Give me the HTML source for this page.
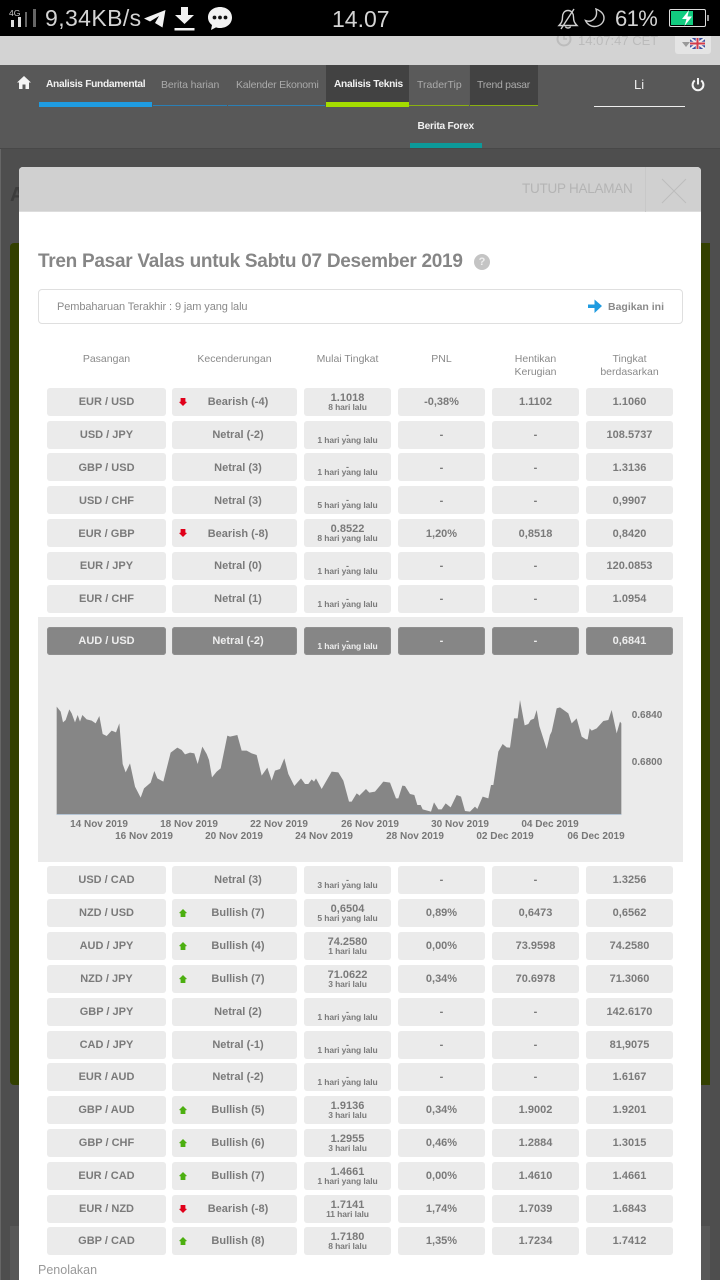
<!DOCTYPE html>
<html><head><meta charset="utf-8"><style>
*{box-sizing:border-box}
html,body{margin:0;padding:0;width:720px;height:1280px;overflow:hidden;background:#4e4e4e;font-family:"Liberation Sans",sans-serif}
.a{position:absolute;white-space:nowrap}
#st{left:0;top:0;width:720px;height:36px;background:#000;color:#d4d4d4}
#lb{left:0;top:36px;width:720px;height:29px;background:#d3d3d3;box-shadow:0 2px 5px rgba(0,0,0,.45);overflow:hidden}
#nav{left:0;top:65px;width:720px;height:83px;background:#585858}
.n{position:absolute;top:14px;font-size:10.5px;line-height:12px;color:#aaa;transform-origin:0 0}
.nb{color:#f2f2f2;font-weight:bold;font-size:10.2px}
.bar{position:absolute}
#m{left:19px;top:167px;width:682px;height:1113px;background:#fff;border-radius:4px 4px 0 0;overflow:hidden;filter:blur(.35px)}
#mh{position:absolute;left:0;top:0;width:682px;height:45px;background:#d0d0d0;border-bottom:1px solid #ddd}
#w{position:absolute;left:0;top:0;width:720px;height:1280px;filter:blur(.3px)}
.r{position:absolute;left:47px;width:627px;height:28px}
.c{position:absolute;top:0;height:28px;background:#ebebeb;border-radius:3px;text-align:center;color:#7a7a7a;font-weight:bold;font-size:11px;line-height:28px}
.t .c{line-height:30px}
.c:nth-child(1){left:0;width:119px}
.c:nth-child(2){left:125px;width:125px;padding-left:7px}
.c:nth-child(3){left:257px;width:87px}
.c:nth-child(4){left:351px;width:87px}
.c:nth-child(5){left:445px;width:87px}
.c:nth-child(6){left:539px;width:87px}
.c b{position:absolute;left:0;width:100%;top:4px;font-size:11px;line-height:12px;font-weight:bold;color:#7a7a7a}
.c i{position:absolute;left:0;width:100%;top:14px;font-style:normal;font-size:8.5px;line-height:10px;font-weight:bold;color:#7a7a7a;letter-spacing:-.1px}
.c b.d{top:8px;font-size:9px}
.up,.dn{position:absolute;left:7px;top:10px;width:8px;height:8px}
.up{background:#4caf10;clip-path:polygon(50% 0,100% 50%,80% 55%,80% 100%,20% 100%,20% 55%,0 50%)}
.dn{background:#e0001a;clip-path:polygon(20% 0,80% 0,80% 45%,100% 50%,50% 100%,0 50%,20% 45%)}
.h .c{background:#868686;color:#eee;box-shadow:inset 0 0 0 1px #8f8f8f}
.h .c b,.h .c i{color:#eee}
.th{position:absolute;text-align:center;font-size:10.5px;line-height:13px;color:#8a8a8a}
.x{position:absolute;font-size:10px;font-weight:bold;color:#777;line-height:12px;white-space:nowrap;text-align:center;width:80px}
</style></head><body>
<div id="w">
<!-- page behind -->
<div class="a" style="left:10px;top:243px;width:9px;height:842px;background:#334000;border-radius:4px 0 0 4px"></div>
<div class="a" style="left:701px;top:243px;width:9px;height:842px;background:#334000"></div>
<div class="a" style="left:0;top:148px;width:1px;height:1132px;background:#666"></div>
<div class="a" style="left:10px;top:1226px;width:9px;height:54px;background:#585858"></div>
<div class="a" style="left:701px;top:1226px;width:9px;height:54px;background:#585858"></div>
<div class="a" style="left:10px;top:184px;font-size:20px;font-weight:bold;color:#3c3c3c">A</div>

<!-- light bar -->
<div class="a" id="lb">
  <svg class="a" style="left:555px;top:-6px" width="18" height="18" viewBox="0 0 18 18"><circle cx="9" cy="9" r="6.5" fill="none" stroke="#bcbcbc" stroke-width="2"/><path d="M9 5v4h3" fill="none" stroke="#bcbcbc" stroke-width="1.5"/></svg>
  <div class="a" style="left:578px;top:-2px;font-size:13px;line-height:14px;color:#bbb">14:07:47 CET</div>
  <div class="a" style="left:675px;top:-4px;width:36px;height:22px;background:#e4e4e4;border-radius:3px"></div>
  <div class="a" style="left:682px;top:6px;border:4px solid transparent;border-top:5px solid #999"></div>
  <svg class="a" style="left:690px;top:2px" width="15" height="11" viewBox="0 0 15 11"><rect width="15" height="11" fill="#3c4fa0"/><path d="M0 0L15 11M15 0L0 11" stroke="#eee" stroke-width="2"/><path d="M7.5 0V11M0 5.5H15" stroke="#eee" stroke-width="3.5"/><path d="M7.5 0V11M0 5.5H15" stroke="#d23a4a" stroke-width="2"/></svg>
</div>

<!-- nav -->
<div class="a" id="nav">
  <svg class="a" style="left:17px;top:11px" width="14" height="13" viewBox="0 0 14 13"><path d="M7 0L14 6.5H12V13H8.5V8.5H5.5V13H2V6.5H0Z" fill="#f4f4f4"/></svg>
  <div class="bar" style="left:326px;top:0;width:83px;height:37px;background:#424242"></div>
  <div class="bar" style="left:409px;top:0;width:60px;height:40px;background:#5a5a5a"></div>
  <div class="bar" style="left:470px;top:0;width:68px;height:40px;background:#424242"></div>
  <div class="n nb" style="left:46px;letter-spacing:-.3px">Analisis Fundamental</div>
  <div class="n" style="left:161px;letter-spacing:-.1px">Berita harian</div>
  <div class="n" style="left:236px;letter-spacing:-.2px">Kalender Ekonomi</div>
  <div class="n nb" style="left:334px;letter-spacing:-.3px">Analisis Teknis</div>
  <div class="n" style="left:417px">TraderTip</div>
  <div class="n" style="left:477px;letter-spacing:-.3px">Trend pasar</div>
  <div class="bar" style="left:39px;top:37px;width:113px;height:5px;background:#1f9be0"></div>
  <div class="bar" style="left:153px;top:40px;width:74px;height:1px;background:#2a7fb5"></div>
  <div class="bar" style="left:228px;top:40px;width:97px;height:1px;background:#2a7fb5"></div>
  <div class="bar" style="left:326px;top:37px;width:83px;height:5px;background:#a4dc00"></div>
  <div class="bar" style="left:409px;top:40px;width:60px;height:1px;background:#8ab010"></div>
  <div class="bar" style="left:470px;top:40px;width:68px;height:1px;background:#8ab010"></div>
  <div class="a" style="left:634px;top:12px;font-size:13px;line-height:15px;color:#eee">Li</div>
  <div class="bar" style="left:594px;top:41px;width:91px;height:1px;background:#eee"></div>
  <svg class="a" style="left:691px;top:12px" width="14" height="15" viewBox="0 0 14 15"><path d="M3.8 3.5A5.4 5.4 0 1 0 10.2 3.5" fill="none" stroke="#f4f4f4" stroke-width="2"/><path d="M7 1V7.5" stroke="#f4f4f4" stroke-width="2"/></svg>
  <div class="n nb" style="left:417.5px;top:56px;letter-spacing:-.25px">Berita Forex</div>
  <div class="bar" style="left:410px;top:78px;width:72px;height:5px;background:#0d9a9a"></div>
</div>
<div class="a" style="left:0;top:148px;width:720px;height:1px;background:#484848"></div>

<!-- modal -->
<div class="a" id="m">
  <div id="mh"></div>
  <div class="a" style="left:503px;top:14px;font-size:13.5px;line-height:16px;color:#b4b4b4;letter-spacing:-.25px">TUTUP HALAMAN</div>
  <div class="a" style="left:626px;top:0;width:1px;height:45px;background:#c8c8c8"></div>
  <svg class="a" style="left:641px;top:10px" width="28" height="28" viewBox="0 0 28 28"><path d="M2 2L26 26M26 2L2 26" stroke="#bdbdbd" stroke-width="1"/></svg>
  <div class="a" style="left:19px;top:83px;font-size:19px;line-height:24px;font-weight:bold;color:#868686;letter-spacing:-.28px">Tren Pasar Valas untuk Sabtu 07 Desember 2019</div>
  <div class="a" style="left:455px;top:87px;width:16px;height:16px;border-radius:50%;background:#c4c4c4;color:#eee;font-size:11px;font-weight:bold;line-height:16px;text-align:center">?</div>
  <div class="a" style="left:19px;top:122px;width:645px;height:35px;border:1px solid #dfdfdf;border-radius:4px;background:#fff"></div>
  <div class="a" style="left:38px;top:133px;font-size:11px;line-height:14px;color:#8a8a8a;letter-spacing:-.1px">Pembaharuan Terakhir : 9 jam yang lalu</div>
  <svg class="a" style="left:569px;top:132px" width="14" height="14" viewBox="0 0 14 14"><path d="M0 5.5H6.5V0.5L14 7L6.5 14V9H0Z" fill="#1f9be0"/></svg>
  <div class="a" style="left:589px;top:133px;font-size:10.5px;line-height:14px;font-weight:bold;color:#8a8a8a">Bagikan ini</div>
  <div class="a" style="left:19px;top:1095px;font-size:12.5px;line-height:16px;color:#999">Penolakan</div>
</div>

<div class="th" style="left:47px;top:353px;width:119px">Pasangan</div>
<div class="th" style="left:172px;top:353px;width:125px">Kecenderungan</div>
<div class="th" style="left:304px;top:353px;width:87px">Mulai Tingkat</div>
<div class="th" style="left:398px;top:353px;width:87px">PNL</div>
<div class="th" style="left:492px;top:353px;width:87px">Hentikan<br>Kerugian</div>
<div class="th" style="left:586px;top:353px;width:87px">Tingkat<br>berdasarkan</div>

<!-- chart panel -->
<div class="a" style="left:38px;top:617px;width:645px;height:245px;background:#ebebeb"></div>
<svg class="a" style="left:0;top:0" width="720" height="1280" viewBox="0 0 720 1280">
<g transform="translate(30,620) scale(.33333)" fill="#868686">
<polygon points="80,582 80,260 92,275 99,307 107,300 118,268 125,280 135,307 143,285 150,305 157,285 170,298 185,302 197,310 208,288 218,342 230,348 245,332 258,337 268,310 278,432 287,457 300,430 315,500 332,533 342,505 362,488 373,453 382,475 400,485 422,398 442,383 455,390 465,403 480,398 493,400 503,432 517,380 530,402 537,420 546,472 560,455 572,445 592,347 600,350 622,345 635,392 650,392 665,400 680,405 695,467 712,443 725,482 735,452 750,447 763,415 775,462 793,498 813,475 825,492 835,492 845,478 852,485 858,475 875,507 905,455 925,457 940,482 957,545 965,545 980,520 991,528 991,582"/>
</g>
<g transform="translate(360,620) scale(.33333)" fill="#868686">
<polygon points="0,582 0,525 18,507 28,518 45,515 70,485 90,488 108,535 115,535 127,497 135,498 150,522 163,525 172,555 182,555 188,568 213,575 222,547 235,568 245,568 257,550 272,562 290,525 303,530 315,573 330,575 345,560 352,567 368,530 385,535 393,495 400,495 415,395 428,372 440,382 450,383 462,295 473,295 480,240 494,316 505,312 512,300 522,296 530,270 538,318 560,387 570,345 575,335 590,265 600,262 625,280 635,310 650,295 665,350 678,358 683,358 689,325 695,332 710,325 730,303 745,300 755,270 770,340 780,305 784,310 784,582"/>
</g>
<rect x="56.5" y="814" width="565" height="1" fill="#b4c4d4"/>
</svg>
<div class="x" style="left:59px;top:819px">14 Nov 2019</div>
<div class="x" style="left:149px;top:819px">18 Nov 2019</div>
<div class="x" style="left:239px;top:819px">22 Nov 2019</div>
<div class="x" style="left:330px;top:819px">26 Nov 2019</div>
<div class="x" style="left:420px;top:819px">30 Nov 2019</div>
<div class="x" style="left:510px;top:819px">04 Dec 2019</div>
<div class="x" style="left:104px;top:831px">16 Nov 2019</div>
<div class="x" style="left:194px;top:831px">20 Nov 2019</div>
<div class="x" style="left:284px;top:831px">24 Nov 2019</div>
<div class="x" style="left:375px;top:831px">28 Nov 2019</div>
<div class="x" style="left:465px;top:831px">02 Dec 2019</div>
<div class="x" style="left:556px;top:831px">06 Dec 2019</div>
<div class="x" style="left:607px;top:710px">0.6840</div>
<div class="x" style="left:607px;top:757px">0.6800</div>

<!-- rows -->
<div class="r" style="top:388px"><div class="c">EUR / USD</div><div class="c"><s class="dn"></s>Bearish (-4)</div><div class="c"><b>1.1018</b><i>8 hari lalu</i></div><div class="c">-0,38%</div><div class="c">1.1102</div><div class="c">1.1060</div></div>
<div class="r" style="top:420.500px"><div class="c">USD / JPY</div><div class="c">Netral (-2)</div><div class="c"><b class="d">-</b><i>1 hari yang lalu</i></div><div class="c">-</div><div class="c">-</div><div class="c">108.5737</div></div>
<div class="r t" style="top:453px"><div class="c">GBP / USD</div><div class="c">Netral (3)</div><div class="c"><b class="d">-</b><i>1 hari yang lalu</i></div><div class="c">-</div><div class="c">-</div><div class="c">1.3136</div></div>
<div class="r t" style="top:486px"><div class="c">USD / CHF</div><div class="c">Netral (3)</div><div class="c"><b class="d">-</b><i>5 hari yang lalu</i></div><div class="c">-</div><div class="c">-</div><div class="c">0,9907</div></div>
<div class="r t" style="top:519px"><div class="c">EUR / GBP</div><div class="c"><s class="dn"></s>Bearish (-8)</div><div class="c"><b>0.8522</b><i>8 hari yang lalu</i></div><div class="c">1,20%</div><div class="c">0,8518</div><div class="c">0,8420</div></div>
<div class="r" style="top:552px"><div class="c">EUR / JPY</div><div class="c">Netral (0)</div><div class="c"><b class="d">-</b><i>1 hari yang lalu</i></div><div class="c">-</div><div class="c">-</div><div class="c">120.0853</div></div>
<div class="r" style="top:585px"><div class="c">EUR / CHF</div><div class="c">Netral (1)</div><div class="c"><b class="d">-</b><i>1 hari yang lalu</i></div><div class="c">-</div><div class="c">-</div><div class="c">1.0954</div></div>
<div class="r h" style="top:627px"><div class="c">AUD / USD</div><div class="c">Netral (-2)</div><div class="c"><b class="d">-</b><i>1 hari yang lalu</i></div><div class="c">-</div><div class="c">-</div><div class="c">0,6841</div></div>
<div class="r" style="top:866px"><div class="c">USD / CAD</div><div class="c">Netral (3)</div><div class="c"><b class="d">-</b><i>3 hari yang lalu</i></div><div class="c">-</div><div class="c">-</div><div class="c">1.3256</div></div>
<div class="r" style="top:899px"><div class="c">NZD / USD</div><div class="c"><s class="up"></s>Bullish (7)</div><div class="c"><b>0,6504</b><i>5 hari yang lalu</i></div><div class="c">0,89%</div><div class="c">0,6473</div><div class="c">0,6562</div></div>
<div class="r" style="top:932px"><div class="c">AUD / JPY</div><div class="c"><s class="up"></s>Bullish (4)</div><div class="c"><b>74.2580</b><i>1 hari lalu</i></div><div class="c">0,00%</div><div class="c">73.9598</div><div class="c">74.2580</div></div>
<div class="r" style="top:965px"><div class="c">NZD / JPY</div><div class="c"><s class="up"></s>Bullish (7)</div><div class="c"><b>71.0622</b><i>3 hari lalu</i></div><div class="c">0,34%</div><div class="c">70.6978</div><div class="c">71.3060</div></div>
<div class="r" style="top:998px"><div class="c">GBP / JPY</div><div class="c">Netral (2)</div><div class="c"><b class="d">-</b><i>1 hari yang lalu</i></div><div class="c">-</div><div class="c">-</div><div class="c">142.6170</div></div>
<div class="r" style="top:1031px"><div class="c">CAD / JPY</div><div class="c">Netral (-1)</div><div class="c"><b class="d">-</b><i>1 hari yang lalu</i></div><div class="c">-</div><div class="c">-</div><div class="c">81,9075</div></div>
<div class="r" style="top:1063px"><div class="c">EUR / AUD</div><div class="c">Netral (-2)</div><div class="c"><b class="d">-</b><i>1 hari yang lalu</i></div><div class="c">-</div><div class="c">-</div><div class="c">1.6167</div></div>
<div class="r" style="top:1096px"><div class="c">GBP / AUD</div><div class="c"><s class="up"></s>Bullish (5)</div><div class="c"><b>1.9136</b><i>3 hari lalu</i></div><div class="c">0,34%</div><div class="c">1.9002</div><div class="c">1.9201</div></div>
<div class="r" style="top:1129px"><div class="c">GBP / CHF</div><div class="c"><s class="up"></s>Bullish (6)</div><div class="c"><b>1.2955</b><i>3 hari lalu</i></div><div class="c">0,46%</div><div class="c">1.2884</div><div class="c">1.3015</div></div>
<div class="r" style="top:1162px"><div class="c">EUR / CAD</div><div class="c"><s class="up"></s>Bullish (7)</div><div class="c"><b>1.4661</b><i>1 hari yang lalu</i></div><div class="c">0,00%</div><div class="c">1.4610</div><div class="c">1.4661</div></div>
<div class="r" style="top:1195px"><div class="c">EUR / NZD</div><div class="c"><s class="dn"></s>Bearish (-8)</div><div class="c"><b>1.7141</b><i>11 hari lalu</i></div><div class="c">1,74%</div><div class="c">1.7039</div><div class="c">1.6843</div></div>
<div class="r" style="top:1227px"><div class="c">GBP / CAD</div><div class="c"><s class="up"></s>Bullish (8)</div><div class="c"><b>1.7180</b><i>8 hari lalu</i></div><div class="c">1,35%</div><div class="c">1.7234</div><div class="c">1.7412</div></div>
</div>

<!-- status bar -->
<div class="a" id="st">
  <div class="a" style="left:9px;top:9px;font-size:8.5px;line-height:9px;color:#ccc">4G</div>
  <div class="a" style="left:11px;top:20px;width:3px;height:7px;background:#ddd"></div>
  <div class="a" style="left:18px;top:17px;width:3px;height:10px;background:#ddd"></div>
  <div class="a" style="left:25px;top:12px;width:2px;height:15px;background:#666"></div>
  <div class="a" style="left:33px;top:9px;width:3px;height:18px;background:#666"></div>
  <div class="a" style="left:45px;top:5px;font-size:23px;line-height:26px;color:#d4d4d4;letter-spacing:.4px">9,34KB/s</div>
  <svg class="a" style="left:144px;top:10px" width="22" height="18" viewBox="0 0 22 18"><path d="M0 8.5L21.5 0L18.5 17.5L11 13L15 6L6 11.5Z" fill="#f2f2f2"/></svg>
  <svg class="a" style="left:174px;top:7px" width="21" height="24" viewBox="0 0 21 24"><path d="M7 0H14V8H20L10.500 17L1 8H7Z" fill="#f2f2f2"/><rect y="21" x="0.500" width="20" height="2.500" fill="#f2f2f2"/></svg>
  <svg class="a" style="left:207px;top:7px" width="26" height="24" viewBox="0 0 26 24"><path d="M13 0C20 0 25 4.500 25 10.500S20 21 13 21C11.500 21 10 20.800 9 20.400L4 23L5 18C2.500 16.200 1 13.500 1 10.500C1 4.500 6 0 13 0Z" fill="#f2f2f2"/><circle cx="7.500" cy="10.500" r="1.900" fill="#111"/><circle cx="13" cy="10.500" r="1.900" fill="#111"/><circle cx="18.500" cy="10.500" r="1.900" fill="#111"/></svg>
  <div class="a" style="left:332px;top:5px;font-size:23px;line-height:28px;color:#d4d4d4">14.07</div>
  <svg class="a" style="left:557px;top:8px" width="22" height="22" viewBox="0 0 22 22"><path d="M11 2.500C7 2.500 5.500 6 5.500 9C5.500 13 4.500 15 2 17.500H20C17.500 15 16.500 13 16.500 9C16.500 6 15 2.500 11 2.500Z" fill="none" stroke="#cfcfcf" stroke-width="1.400"/><path d="M8.500 18.500C9 20.500 13 20.500 13.500 18.500" fill="none" stroke="#cfcfcf" stroke-width="1.400"/><path d="M17 1L4 21" stroke="#cfcfcf" stroke-width="1.400"/></svg>
  <svg class="a" style="left:584px;top:8px" width="21" height="20" viewBox="0 0 21 20"><path d="M12 1C17 3 20 6 20 10C20 15 15.500 18.500 10.500 18.500C6.500 18.500 3 16 1.500 12.500C7.500 15 14.500 10 12 1Z" fill="none" stroke="#cfcfcf" stroke-width="1.400"/></svg>
  <div class="a" style="left:615px;top:5px;font-size:22px;line-height:28px;color:#d4d4d4;letter-spacing:-.6px">61%</div>
  <div class="a" style="left:669px;top:9px;width:37px;height:18px;border:1px solid #ddd;border-radius:2px"></div>
  <div class="a" style="left:671px;top:11px;width:22px;height:14px;background:#12cc80"></div>
  <div class="a" style="left:707px;top:15px;width:2px;height:6px;background:#999"></div>
  <svg class="a" style="left:681px;top:10px" width="12" height="16" viewBox="0 0 12 16"><path d="M8 0L1 9H5.500L3.500 16L11 6.500H6.500Z" fill="#fff"/></svg>
</div>
</body></html>
